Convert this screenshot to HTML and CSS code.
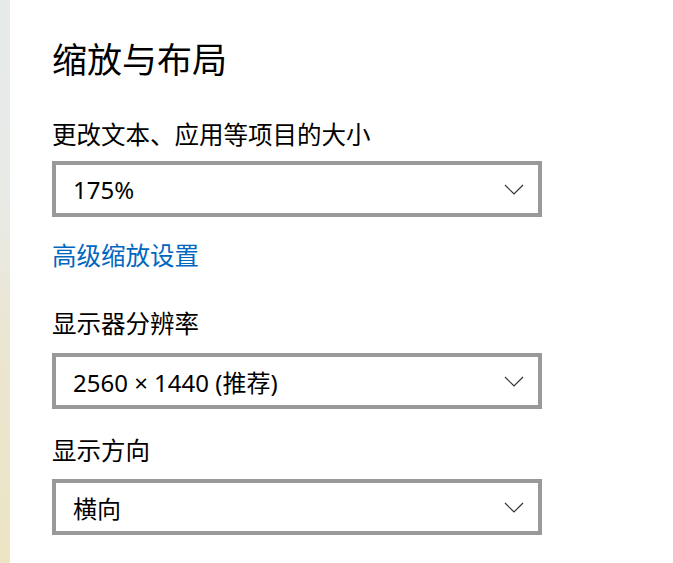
FILE: index.html
```html
<!DOCTYPE html>
<html lang="zh-CN">
<head>
    <meta charset="UTF-8">
    <meta name="viewport" content="width=device-width, initial-scale=1.0">
    <title>缩放与布局</title>
    <link rel="stylesheet" href="styles.css">
</head>
<body>
    <div class="side-strip"></div>
    <div class="settings">
        <h1 class="title">缩放与布局</h1>

        <div class="label first">更改文本、应用等项目的大小</div>
        <div class="dropdown">
            <span>175%</span>
            <svg class="chevron" width="20" height="11" viewBox="0 0 20 11"><path d="M1 1 L10 10 L19 1" fill="none" stroke="#333" stroke-width="1.2"/></svg>
        </div>

        <a class="link" href="#">高级缩放设置</a>

        <div class="label second">显示器分辨率</div>
        <div class="dropdown">
            <span>2560 × 1440 (推荐)</span>
            <svg class="chevron" width="20" height="11" viewBox="0 0 20 11"><path d="M1 1 L10 10 L19 1" fill="none" stroke="#333" stroke-width="1.2"/></svg>
        </div>

        <div class="label third">显示方向</div>
        <div class="dropdown">
            <span>横向</span>
            <svg class="chevron" width="20" height="11" viewBox="0 0 20 11"><path d="M1 1 L10 10 L19 1" fill="none" stroke="#333" stroke-width="1.2"/></svg>
        </div>
    </div>
</body>
</html>
```

FILE: styles.css
```css
html, body {
    margin: 0;
    padding: 0;
    height: 100%;
}
body {
    display: flex;
    background-color: #fff;
    font-family: "Noto Sans", "Noto Sans CJK SC", sans-serif;
    color: #000;
    overflow: hidden;
}
.side-strip {
    width: 10px;
    flex-shrink: 0;
    background: linear-gradient(#e6eaea 0%, #e8eae6 35%, #ebe6d2 60%, #ede4c4 100%);
}
.settings {
    padding-left: 42px;
    width: 490px;
}
.title {
    margin: 40px 0 0;
    font-size: 35px;
    font-weight: normal;
    line-height: 40px;
    color: #000;
}
.label {
    font-size: 24.5px;
    line-height: 32px;
}
.label.first {
    margin-top: 39px;
    margin-bottom: 10px;
}
.label.second {
    margin-top: 36px;
    margin-bottom: 13px;
}
.label.third {
    margin-top: 26px;
    margin-bottom: 12px;
}
.dropdown {
    box-sizing: border-box;
    height: 56px;
    border: 4px solid #999;
    display: flex;
    align-items: center;
    justify-content: space-between;
    padding: 0 14px 0 17px;
    font-size: 24px;
}
.chevron {
    display: block;
}
.link {
    display: block;
    margin-top: 23px;
    font-size: 24.5px;
    line-height: 32px;
    color: #0067c0;
    text-decoration: none;
}
```
